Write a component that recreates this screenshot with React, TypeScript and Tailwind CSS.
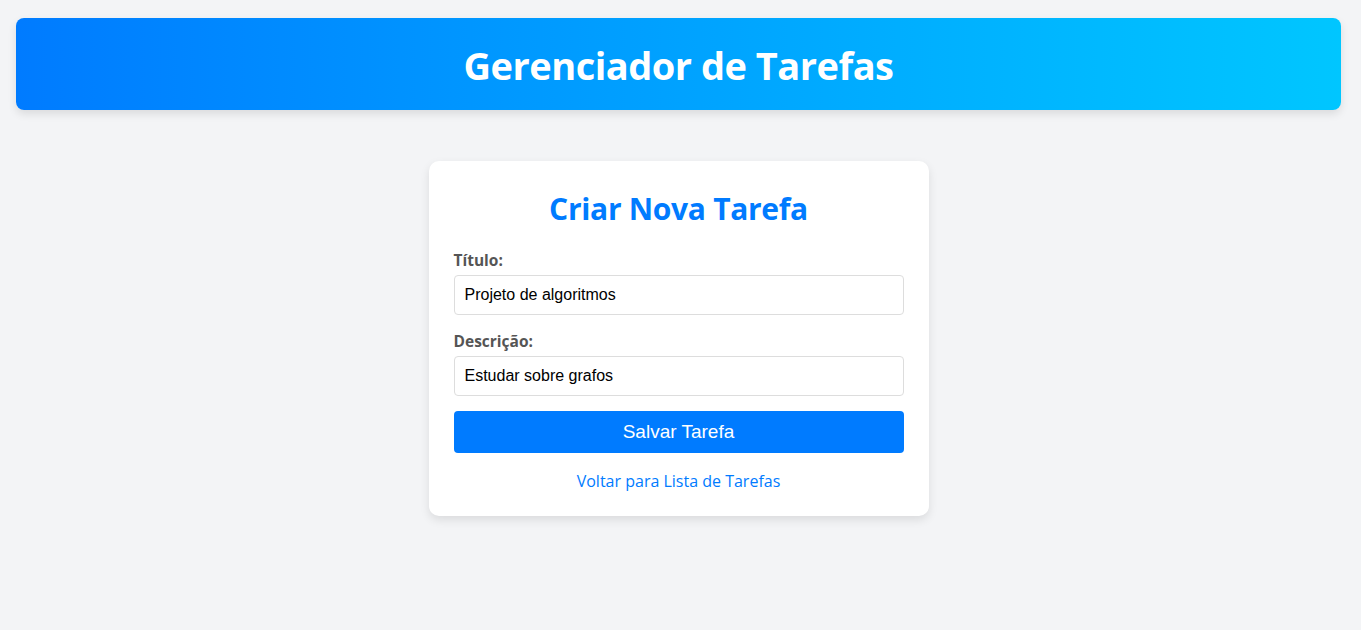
import { FC } from 'react'

const font = { fontFamily: '"Segoe UI", "Open Sans", sans-serif' }

const Field: FC<{ label: string; value: string; last?: boolean }> = ({ label, value, last }) => (
  <div className={last ? 'mb-[15px]' : 'mb-[16px]'}>
    <label className="mb-[5px] block text-[15.5px] font-bold leading-[20px] text-[#555]">{label}</label>
    <input
      defaultValue={value}
      className="h-[40px] w-full rounded-[4px] border border-[#ddd] bg-white px-[10px] font-['Liberation_Sans',Arial,sans-serif] text-[16px] text-black outline-none"
    />
  </div>
)

const App: FC = () => {
  return (
    <div className="min-h-screen bg-[#f3f4f6] pl-4 pr-5 pt-[18px]" style={font}>
      <header className="flex h-[92px] items-center justify-center rounded-lg bg-gradient-to-r from-[#007bff] to-[#00c6ff] pt-[3px] shadow-[0_4px_8px_rgba(0,0,0,0.1)]">
        <h1 className="text-[38px] font-bold tracking-[-0.5px] text-white">Gerenciador de Tarefas</h1>
      </header>

      <main className="mx-auto mt-[51px] w-[500px] rounded-[10px] bg-white px-[25px] pb-[23px] pt-[28px] shadow-[0_4px_10px_rgba(0,0,0,0.1)]">
        <h2 className="mb-[21px] text-center text-[30px] font-bold leading-[40px] tracking-[-0.3px] text-[#007bff]">Criar Nova Tarefa</h2>
        <form onSubmit={(e) => e.preventDefault()}>
          <Field label="Título:" value="Projeto de algoritmos" />
          <Field label="Descrição:" value="Estudar sobre grafos" last />
          <button
            type="submit"
            className="h-[42px] w-full rounded-[4px] bg-[#007bff] font-['Liberation_Sans',Arial,sans-serif] text-[19px] text-white"
          >
            Salvar Tarefa
          </button>
        </form>
        <div className="mt-[16px] text-center">
          <a href="#" className="text-[16px] text-[#007bff]">Voltar para Lista de Tarefas</a>
        </div>
      </main>
    </div>
  )
}

export default App
